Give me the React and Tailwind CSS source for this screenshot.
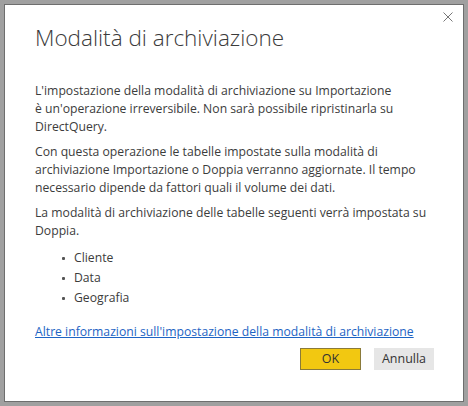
export default function App() {
  return (
    <div className="w-[468px] h-[406px] bg-[#a0a0a0] p-[4px]" style={{ fontFamily: '"Open Sans", "Noto Sans", sans-serif' }}>
      <div className="relative h-full border border-[#6e6e6e] bg-white pl-[30px] pr-[20px] pt-[15px]">
        {/* close */}
        <button className="absolute top-[7px] right-[10px] w-[10px] h-[10px]" aria-label="Close">
          <svg width="10" height="10" viewBox="0 0 10 10" className="block">
            <path d="M0.5 0.5 L9.5 9.5 M9.5 0.5 L0.5 9.5" stroke="#777" strokeWidth="1" fill="none" />
          </svg>
        </button>

        <h1 className="text-[22.5px] font-light text-[#3b3b3b] leading-[36px]">Modalità di archiviazione</h1>

        <div className="mt-[26px] text-[12.2px] leading-[18px] text-[#3c3c3c] whitespace-nowrap">
          <p>
            L'impostazione della modalità di archiviazione su Importazione
            <br />
            è un'operazione irreversibile. Non sarà possibile ripristinarla su
            <br />
            DirectQuery.
          </p>
          <p className="mt-[7px]">
            Con questa operazione le tabelle impostate sulla modalità di
            <br />
            archiviazione Importazione o Doppia verranno aggiornate. Il tempo
            <br />
            necessario dipende da fattori quali il volume dei dati.
          </p>
          <p className="mt-[7px]">
            La modalità di archiviazione delle tabelle seguenti verrà impostata su
            <br />
            Doppia.
          </p>
          <ul className="mt-[8px] pl-[27px] leading-[20px]">
            <li className="flex items-center gap-[9px]"><span className="w-[3px] h-[3px] rounded-[1px] bg-[#555]" />Cliente</li>
            <li className="flex items-center gap-[9px]"><span className="w-[3px] h-[3px] rounded-[1px] bg-[#555]" />Data</li>
            <li className="flex items-center gap-[9px]"><span className="w-[3px] h-[3px] rounded-[1px] bg-[#555]" />Geografia</li>
          </ul>
          <a href="#" className="block mt-[15px] text-[#1d64c4] underline">Altre informazioni sull'impostazione della modalità di archiviazione</a>
        </div>

        <div className="mt-[7px] flex justify-end gap-[13px] pr-[9px]">
          <button className="w-[61px] h-[22px] bg-[#f2c811] border border-[#8a7a3a] text-[12.5px] text-[#333]">OK</button>
          <button className="w-[60px] h-[22px] bg-[#e6e6e6] text-[12.5px] text-[#333]">Annulla</button>
        </div>
      </div>
    </div>
  );
}
